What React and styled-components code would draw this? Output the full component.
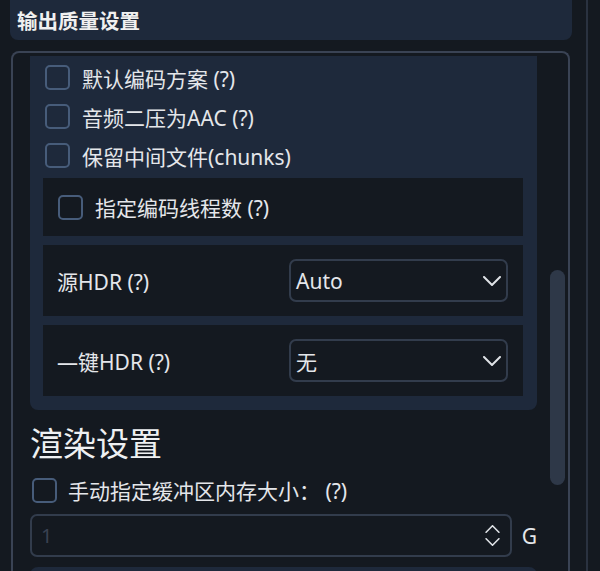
import React from "react";
import styled, { createGlobalStyle } from "styled-components";

const Global = createGlobalStyle`
  html, body { margin: 0; padding: 0; background: #141920; overflow: hidden; }
  body { font-family: "Noto Sans", "Noto Sans CJK SC", sans-serif; color: #e4e6ea; }
`;

const Page = styled.div`
  width: 588px;
  height: 571px;
  border-right: 2px solid #2a3240;
  overflow: hidden;
  display: flex;
  flex-direction: column;
  padding-left: 10px;
  box-sizing: border-box;
`;

const Header = styled.div`
  width: 562px;
  height: 40px;
  flex: none;
  background: #1e293b;
  border-radius: 0 0 8px 8px;
  display: flex;
  align-items: center;
  padding-left: 7px;
  box-sizing: border-box;
  font-size: 20.5px;
  font-weight: 700;
  color: #f0f0f0;
`;

const Frame = styled.div`
  margin-top: 11px;
  margin-left: 1px;
  width: 559px;
  flex: 1;
  border: 2px solid #3a4354;
  border-bottom: none;
  border-radius: 8px 8px 0 0;
  box-sizing: border-box;
  display: flex;
  overflow: hidden;
  background: #141920;
`;

const Scroll = styled.div`
  flex: 1;
  padding: 3px 13px 0 17px;
  display: flex;
  flex-direction: column;
  overflow: hidden;
`;

const Track = styled.div`
  width: 15px;
  flex: none;
  margin-right: 3px;
  padding-top: 217px;
`;

const Thumb = styled.div`
  width: 15px;
  height: 215px;
  border-radius: 8px;
  background: #2e3848;
`;

const Panel = styled.div`
  background: #1e293b;
  border-radius: ${(p) => (p.$open ? "8px 8px 0 0" : "0 0 8px 8px")};
  padding: ${(p) => (p.$open ? "0" : "2px 14px 14px 13px")};
  min-height: ${(p) => (p.$open ? "20px" : "0")};
  display: flex;
  flex-direction: column;
  flex: none;
`;

const CheckRow = styled.label`
  height: ${(p) => p.$h || 39}px;
  display: flex;
  align-items: center;
  gap: ${(p) => p.$gap || 12}px;
  padding-left: ${(p) => p.$pl || 0}px;
  font-size: 21px;
  flex: none;
  white-space: nowrap;
`;

const Box = styled.span`
  width: 25px;
  height: 25px;
  box-sizing: border-box;
  border: 2px solid #475c7a;
  border-radius: 5px;
  flex: none;
`;

const Group = styled.div`
  background: #141920;
  height: ${(p) => p.$h}px;
  margin-top: ${(p) => p.$mt}px;
  display: flex;
  align-items: center;
  padding: 0 15px 0 ${(p) => p.$pl || 14}px;
  box-sizing: border-box;
  font-size: 21px;
`;

const Label = styled.div`
  width: 232px;
  flex: none;
`;

const Select = styled.div`
  flex: 1;
  height: 43px;
  border: 2px solid #323c4c;
  border-radius: 7px;
  box-sizing: border-box;
  display: flex;
  align-items: center;
  justify-content: space-between;
  padding: 0 5px 0 5px;
  font-size: 21px;
`;

const Heading = styled.div`
  margin-top: 12px;
  height: 44px;
  line-height: 44px;
  font-size: 33px;
  color: #eef0f2;
  flex: none;
`;

const InputRow = styled.div`
  display: flex;
  align-items: center;
  gap: 10px;
  height: 43px;
  flex: none;
  font-size: 21px;
`;

const Input = styled.div`
  width: 482px;
  height: 43px;
  border: 2px solid #323c4c;
  border-radius: 7px;
  box-sizing: border-box;
  display: flex;
  align-items: center;
  justify-content: space-between;
  padding: 0 10px 0 9px;
  color: #3a4252;
  font-size: 20px;
`;

const Spin = styled.div`
  display: flex;
  flex-direction: column;
  gap: 5px;
`;

const Spacer = styled.div`
  height: 10px;
  flex: none;
`;

const Chevron = ({ w = 18, h = 10, up }) => (
  <svg width={w} height={h} viewBox="0 0 18 10">
    <polyline
      points={up ? "1,9 9,1 17,9" : "1,1 9,9 17,1"}
      fill="none"
      stroke="#dfe2e6"
      strokeWidth="2"
      strokeLinecap="round"
      strokeLinejoin="round"
    />
  </svg>
);

export default function App() {
  return (
    <>
      <Global />
      <Page>
        <Header>输出质量设置</Header>
        <Frame>
          <Scroll>
            <Panel>
              <CheckRow $pl={2}>
                <Box />
                默认编码方案 (?)
              </CheckRow>
              <CheckRow $pl={2}>
                <Box />
                音频二压为AAC (?)
              </CheckRow>
              <CheckRow $pl={2}>
                <Box />
                保留中间文件(chunks)
              </CheckRow>
              <Group $h={58} $mt={3} $pl={15}>
                <CheckRow $h={58} $gap={12}>
                  <Box />
                  指定编码线程数 (?)
                </CheckRow>
              </Group>
              <Group $h={71} $mt={9}>
                <Label>源HDR (?)</Label>
                <Select>
                  Auto
                  <Chevron />
                </Select>
              </Group>
              <Group $h={71} $mt={9}>
                <Label>—键HDR (?)</Label>
                <Select>
                  无
                  <Chevron />
                </Select>
              </Group>
            </Panel>
            <Heading>渲染设置</Heading>
            <CheckRow $h={48} $pl={2} $gap={11}>
              <Box />
              手动指定缓冲区内存大小：&nbsp;(?)
            </CheckRow>
            <InputRow>
              <Input>
                1
                <Spin>
                  <Chevron w={15} h={8} up />
                  <Chevron w={15} h={8} />
                </Spin>
              </Input>
              G
            </InputRow>
            <Spacer />
            <Panel $open />
          </Scroll>
          <Track>
            <Thumb />
          </Track>
        </Frame>
      </Page>
    </>
  );
}
